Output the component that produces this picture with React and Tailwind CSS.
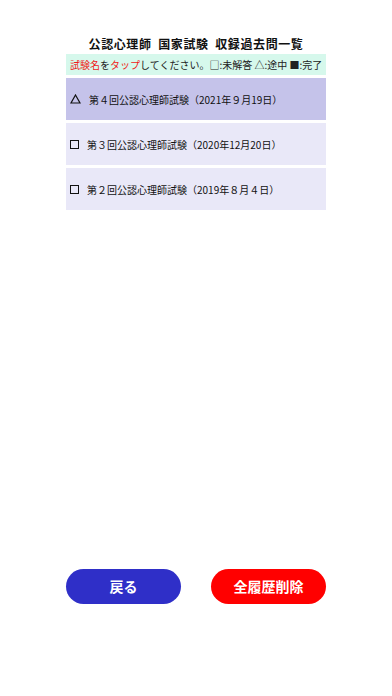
import React from 'react';

const exams = [
  { mark: '△', label: '第４回公認心理師試験（2021年９月19日）', active: true },
  { mark: '☐', label: '第３回公認心理師試験（2020年12月20日）' },
  { mark: '☐', label: '第２回公認心理師試験（2019年８月４日）' },
];

function Mark({ type }) {
  if (type === '△') {
    return (
      <svg width="11" height="10" viewBox="0 0 11 10" className="shrink-0">
        <path d="M5.5 1 L10 9 L1 9 Z" fill="none" stroke="#111" strokeWidth="1.2" />
      </svg>
    );
  }
  return <span className="shrink-0 w-[9px] h-[9px] border-[1.5px] border-[#111]" />;
}

export default function App() {
  return (
    <div
      className="w-[392px] h-[696px] bg-white flex flex-col items-center pt-[35px] pb-[92px]"
      style={{ fontFamily: '"Noto Sans CJK JP", "Noto Sans", sans-serif' }}
    >
      <div className="w-[260px] text-center text-[12px] leading-[18px] font-bold tracking-[0.6px] text-[#111]">
        公認心理師&nbsp; 国家試験&nbsp; 収録過去問一覧
      </div>
      <div className="w-[260px] mt-[1px] h-[21px] bg-[#d6f8ec] flex items-center px-[4px] text-[10px] text-[#222] whitespace-nowrap">
        <span className="text-[#f01818]">試験名</span>を<span className="text-[#f01818]">タップ</span>してください。□:未解答 △:途中 ■:完了
      </div>
      <div className="w-[260px] mt-[3px] flex flex-col gap-[3px]">
        {exams.map((e, i) => (
          <div
            key={i}
            className={`h-[42px] flex items-center gap-[7px] px-[4px] text-[10px] text-[#111] ${e.active ? 'bg-[#c5c3ea]' : 'bg-[#e9e8f8]'}`}
          >
            <Mark type={e.mark} />
            <span className="ml-[1px]">{e.label}</span>
          </div>
        ))}
      </div>
      <div className="flex-1" />
      <div className="w-[260px] flex justify-between">
        <button className="w-[115px] h-[35px] rounded-full bg-[#2f2fc8] text-white text-[14px] font-semibold">戻る</button>
        <button className="w-[115px] h-[35px] rounded-full bg-[#ff0000] text-white text-[14px] font-semibold">全履歴削除</button>
      </div>
    </div>
  );
}
